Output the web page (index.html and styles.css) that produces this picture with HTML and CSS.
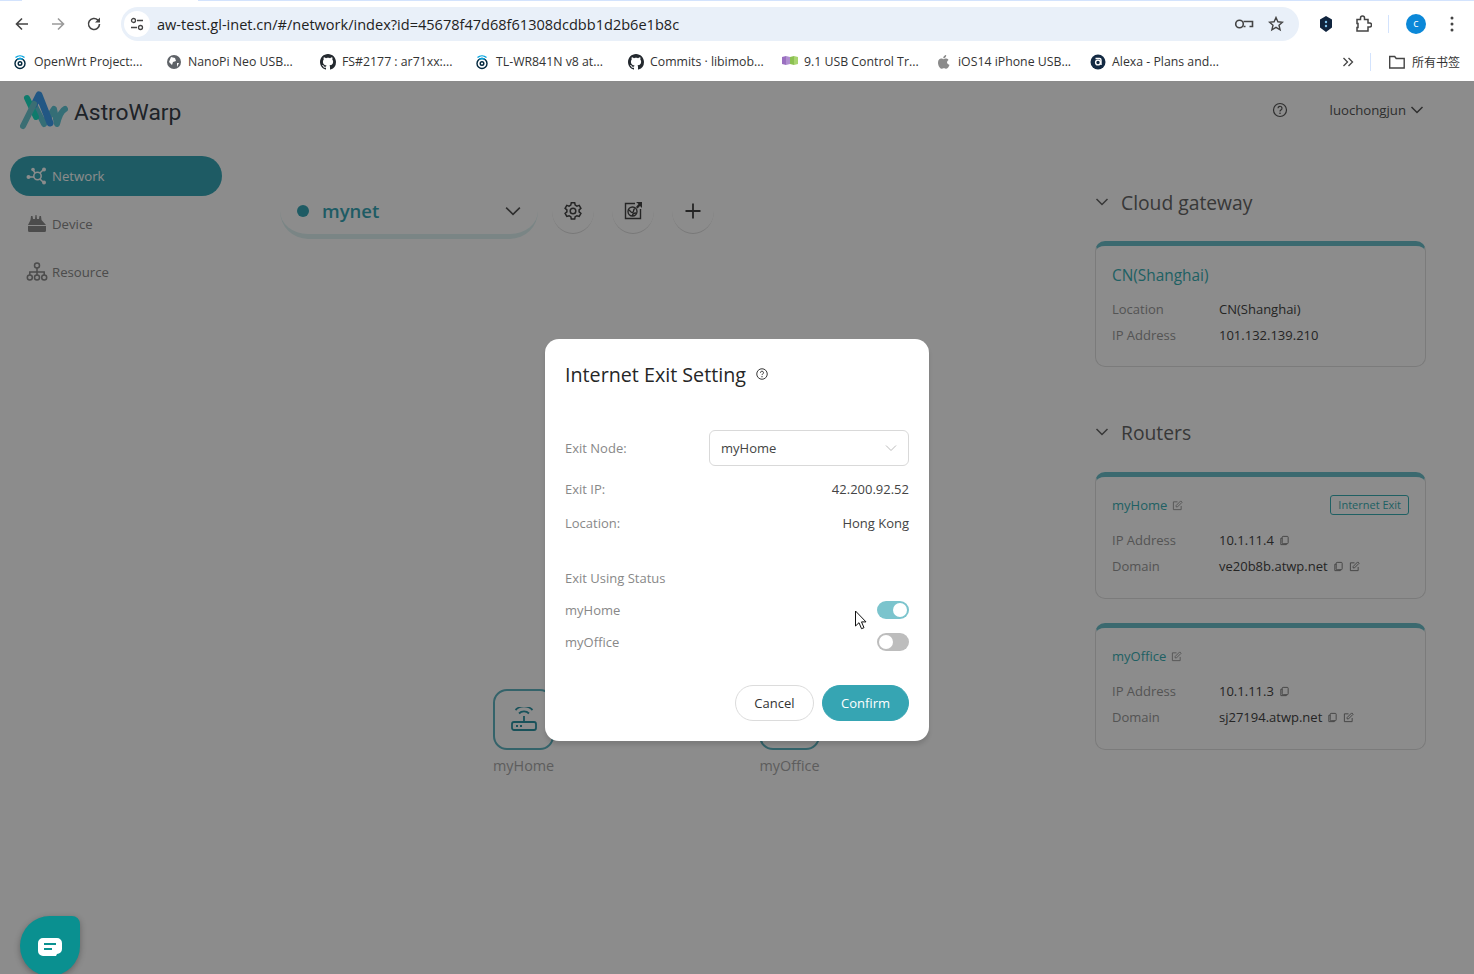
FILE: index.html
```html
<!DOCTYPE html>
<html lang="en">
<head>
    <meta charset="UTF-8">
    <title>AstroWarp</title>
    <link rel="stylesheet" href="styles.css">
</head>
<body>
    <svg class="defs" width="0" height="0">
        <symbol id="github" viewBox="0 0 16 16"><path fill="#24292f" d="M8 0C3.58 0 0 3.58 0 8c0 3.54 2.29 6.53 5.47 7.59.4.07.55-.17.55-.38 0-.19-.01-.82-.01-1.49-2.01.37-2.53-.49-2.69-.94-.09-.23-.48-.94-.82-1.13-.28-.15-.68-.52-.01-.53.63-.01 1.08.58 1.23.82.72 1.21 1.87.87 2.33.66.07-.52.28-.87.51-1.07-1.78-.2-3.64-.89-3.64-3.95 0-.87.31-1.59.82-2.15-.08-.2-.36-1.02.08-2.12 0 0 .67-.21 2.2.82.64-.18 1.32-.27 2-.27.68 0 1.36.09 2 .27 1.53-1.04 2.2-.82 2.2-.82.44 1.1.16 1.92.08 2.12.51.56.82 1.27.82 2.15 0 3.07-1.87 3.75-3.65 3.95.29.25.54.73.54 1.48 0 1.07-.01 1.93-.01 2.2 0 .21.15.46.55.38A8.013 8.013 0 0016 8c0-4.42-3.58-8-8-8z"/></symbol>
        <symbol id="openwrt" viewBox="0 0 16 16"><g fill="none" stroke-width="1.4"><circle cx="8" cy="9.5" r="5" stroke="#00263c"/><circle cx="8" cy="9.5" r="1.8" stroke="#00263c"/><path d="M3.5 3.5a7 7 0 0 1 9 0" stroke="#00a3e0"/><path d="M5.5 5.5a4 4 0 0 1 5 0" stroke="#00a3e0"/></g></symbol>
        <symbol id="edit" viewBox="0 0 12 12"><g fill="none" stroke="currentColor" stroke-width="1"><path d="M10 6.5V10.5H1.5V2H6"/><path d="M4.5 7.5V6L9.5 1l1.5 1.5-5 5z"/></g></symbol>
        <symbol id="copy" viewBox="0 0 12 12"><g fill="none" stroke="currentColor" stroke-width="1"><rect x="3.5" y="1.5" width="6.5" height="8" rx="1"/><path d="M3.5 3.5H2v7h6V9.5"/></g></symbol>
        <symbol id="chev" viewBox="0 0 14 14"><path fill="none" stroke="currentColor" stroke-width="1.5" d="M1.5 4l5.5 5.5L12.5 4"/></symbol>
    </svg>

    <div class="browser">
        <div class="tabstrip"><span class="tab-active"></span></div>
        <div class="toolbar">
            <svg class="tb-icon" width="16" height="16" viewBox="0 0 16 16"><path fill="none" stroke="#444" stroke-width="1.6" d="M14 8H2.5M8 2.5L2.5 8 8 13.5"/></svg>
            <svg class="tb-icon" width="16" height="16" viewBox="0 0 16 16"><path fill="none" stroke="#9a9a9a" stroke-width="1.6" d="M2 8h11.5M8 2.5L13.5 8 8 13.5"/></svg>
            <svg class="tb-icon" width="16" height="16" viewBox="0 0 16 16"><path fill="none" stroke="#444" stroke-width="1.6" d="M13.5 8a5.5 5.5 0 1 1-1.6-3.9L13.5 5.7"/><path fill="#444" d="M14 1.5V6.5H9z"/></svg>
            <div class="omnibox">
                <span class="site-btn">
                    <svg width="16" height="16" viewBox="0 0 16 16"><g fill="none" stroke="#444" stroke-width="1.3"><circle cx="4.5" cy="4.5" r="2"/><path d="M8 4.5h6M2 11.5h6"/><circle cx="11.5" cy="11.5" r="2"/></g></svg>
                </span>
                <span class="url">aw-test.gl-inet.cn/#/network/index?id=45678f47d68f61308dcdbb1d2b6e1b8c</span>
                <svg class="key" width="20" height="14" viewBox="0 0 20 14"><g fill="none" stroke="#444" stroke-width="1.6"><circle cx="5.5" cy="7" r="3.8"/><path d="M9.5 4.5h9v5h-3M9.5 9.5h2"/></g></svg>
                <svg class="star" width="16" height="16" viewBox="0 0 16 16"><path fill="none" stroke="#444" stroke-width="1.4" d="M8 1.500l1.900 4.300 4.600.4-3.500 3 1.100 4.600L8 11.400l-4.100 2.400L5 9.200l-3.500-3 4.600-.4z"/></svg>
            </div>
            <svg class="ext-shield" width="14" height="16" viewBox="0 0 14 16"><path fill="#10243e" d="M7 0l6 3.500v8L7 16l-6-4.500v-8z"/><circle cx="7" cy="6" r="1.2" fill="#7fc4ef"/><circle cx="7" cy="10" r="1.2" fill="#7fc4ef"/></svg>
            <svg class="ext-puzzle" width="18" height="18" viewBox="0 0 18 18"><path fill="none" stroke="#444" stroke-width="1.5" d="M3 4.500h3.500V3a2 2 0 0 1 4 0v1.500H14v3.500h1.500a2 2 0 0 1 0 4H14v4H3v-3.500h1v-4H3z"/></svg>
            <span class="tb-sep"></span>
            <span class="avatar">c</span>
            <svg class="dots" width="4" height="16" viewBox="0 0 4 16"><g fill="#444"><circle cx="2" cy="2" r="1.5"/><circle cx="2" cy="8" r="1.5"/><circle cx="2" cy="14" r="1.5"/></g></svg>
        </div>
        <div class="bookmarks">
            <a class="bm"><svg width="16" height="16"><use href="#openwrt"/></svg>OpenWrt Project:...</a>
            <a class="bm"><svg width="16" height="16" viewBox="0 0 16 16"><circle cx="8" cy="8" r="7" fill="#5f6368"/><path fill="#fff" d="M5 3l4 1 1 3-3 1-1 3-3-3zM11 9l2 0-2 4z"/></svg>NanoPi Neo USB...</a>
            <a class="bm"><svg width="16" height="16"><use href="#github"/></svg>FS#2177 : ar71xx:...</a>
            <a class="bm"><svg width="16" height="16"><use href="#openwrt"/></svg>TL-WR841N v8 at...</a>
            <a class="bm"><svg width="16" height="16"><use href="#github"/></svg>Commits · libimob...</a>
            <a class="bm"><svg width="16" height="16" viewBox="0 0 16 16"><path fill="#9a6fc0" d="M0 3l4-1v9l-4-1z"/><path fill="#b08fd0" d="M4 2l4 1v7l-4 1z"/><path fill="#8cc152" d="M8 3l4-1v9l-4-1z"/><path fill="#a8d46f" d="M12 2l4 1v7l-4 1z"/></svg>9.1 USB Control Tr...</a>
            <a class="bm"><svg width="16" height="16" viewBox="0 0 16 16"><path fill="#8a8a8a" d="M11 8.500c0-1.800 1.400-2.500 1.500-2.600-.8-1.200-2-1.300-2.500-1.300-1-.1-2 .6-2.500.6s-1.300-.6-2.200-.6C3.700 4.600 2 6 2 8.800c0 2.800 2 6 3.500 6 .8 0 1.300-.6 2.400-.6s1.500.6 2.400.6c1.500 0 3-3 3.200-4-.1 0-2.500-.9-2.500-2.300zM9.500 3.300c.5-.6.800-1.500.7-2.300-.7 0-1.600.5-2.100 1.100-.5.500-.9 1.400-.8 2.200.8.100 1.600-.4 2.200-1z"/></svg>iOS14 iPhone USB...</a>
            <a class="bm bm-last"><svg width="16" height="16" viewBox="0 0 16 16"><circle cx="8" cy="8" r="7.5" fill="#132a43"/><circle cx="8" cy="8.5" r="2.4" fill="none" stroke="#fff" stroke-width="1.4"/><path fill="none" stroke="#fff" stroke-width="1.4" d="M5.500 4.500h4a1.500 1.500 0 0 1 1.500 1.500v5"/></svg>Alexa - Plans and...</a>
            <svg class="bm-more" width="12" height="12" viewBox="0 0 12 12"><path fill="none" stroke="#444" stroke-width="1.3" d="M1.500 2l4 4-4 4M6.500 2l4 4-4 4"/></svg>
            <span class="tb-sep bm-sep"></span>
            <a class="bm bm-all"><svg width="18" height="16" viewBox="0 0 18 16"><path fill="none" stroke="#444" stroke-width="1.4" d="M1.700 2.500h5l1.500 2h8v9.500H1.700z"/></svg>所有书签</a>
        </div>
    </div>

    <div class="app">
        <header class="app-header">
            <div class="brand">
                <svg width="48" height="40" viewBox="0 0 48 40">
                    <path fill="none" stroke="#62c8d8" stroke-width="6" stroke-linecap="round" stroke-linejoin="round" d="M15 15l9 18 10-15 3 15c2-8 4-13 8-15"/>
                    <path fill="none" stroke="#3f9ff0" stroke-width="7" stroke-linecap="round" stroke-linejoin="round" d="M14 14l5-10 11 28"/>
                    <path fill="none" stroke="#1be0c5" stroke-width="6" stroke-linecap="round" d="M7 7l9 19"/>
                    <path fill="none" stroke="#6cc8d2" stroke-width="6" stroke-linecap="round" d="M3 35l11-22"/>
                </svg>
                <span class="brand-name">AstroWarp</span>
            </div>
            <div class="user-area">
                <svg width="16" height="16" viewBox="0 0 16 16"><circle cx="8" cy="8" r="6.5" fill="none" stroke="#555" stroke-width="1.2"/><path fill="none" stroke="#555" stroke-width="1.2" d="M6 6.300a2 2 0 1 1 2.800 1.800c-.6.300-.8.600-.8 1.300"/><circle cx="8" cy="11.300" r=".8" fill="#555"/></svg>
                <span class="user-name">luochongjun <svg width="14" height="14"><use href="#chev"/></svg></span>
            </div>
        </header>

        <div class="app-body">
            <nav class="sidebar">
                <a class="nav-item active">
                    <svg width="22" height="20" viewBox="0 0 22 20"><g fill="none" stroke="currentColor" stroke-width="1.5"><circle cx="11.5" cy="10" r="3.7"/><path d="M3 11h5M14 7l3-3M14 13l3 3M9 7L7.500 4.500"/></g><g fill="currentColor"><circle cx="2.5" cy="11" r="2"/><circle cx="18" cy="3.500" r="2"/><circle cx="18" cy="16.500" r="2"/><circle cx="7" cy="3.500" r="1.800"/></g></svg>
                    Network
                </a>
                <a class="nav-item">
                    <svg width="22" height="20" viewBox="0 0 22 20"><path fill="currentColor" d="M2 11l2.500-5 .5-4h1.500l.5 3h2l.5-4h1l.5 4h2l.5-3H15l.5 4L20 11zM2 12h18v4.500a1.500 1.500 0 0 1-1.500 1.500h-15A1.500 1.500 0 0 1 2 16.500z"/></svg>
                    Device
                </a>
                <a class="nav-item">
                    <svg width="22" height="20" viewBox="0 0 22 20"><g fill="none" stroke="currentColor" stroke-width="1.5"><circle cx="11" cy="3.500" r="2.500"/><circle cx="3.800" cy="15.500" r="2.500"/><circle cx="11" cy="15.500" r="2.500"/><circle cx="18.200" cy="15.500" r="2.500"/><path d="M11 6v7M3.800 13v-3h14.400v3"/></g></svg>
                    Resource
                </a>
            </nav>

            <main class="main">
                <div class="net-bar">
                    <div class="net-select">
                        <span class="net-dot"></span>
                        <span class="net-name">mynet</span>
                        <svg class="net-chev" width="16" height="16" viewBox="0 0 14 14"><path fill="none" stroke="#555" stroke-width="1.4" d="M1 4l6 6 6-6"/></svg>
                    </div>
                    <button class="circle-btn"><svg width="20" height="20" viewBox="0 0 20 20"><g fill="none" stroke="#444" stroke-width="1.5"><circle cx="10" cy="10" r="2.800"/><path d="M8.300 1.800h3.400l.5 2.300 1.700 1 2.300-.7 1.700 2.900-1.800 1.600v2l1.800 1.600-1.700 2.900-2.300-.7-1.700 1-.5 2.300H8.300l-.5-2.300-1.700-1-2.300.7-1.700-2.900 1.800-1.600v-2L2.100 7.300l1.700-2.900 2.300.7 1.700-1z"/></g></svg></button>
                    <button class="circle-btn"><svg width="20" height="20" viewBox="0 0 20 20"><g fill="none" stroke="#444" stroke-width="1.4"><path d="M12 2.500H2.500v15h15V8"/><circle cx="9.500" cy="10.500" r="4.500"/><path d="M5.500 9c2 0 2 3 4 2.500S10 7 12 8M9.500 15c0-2 1-3 3.500-3"/></g><path fill="#444" d="M13 1h6v6l-2-2-2.500 2.500-1.500-1.500L15.500 3z"/></svg></button>
                    <button class="circle-btn"><svg width="20" height="20" viewBox="0 0 20 20"><path fill="none" stroke="#444" stroke-width="1.8" d="M10 2.500v15M2.500 10h15"/></svg></button>
                </div>

                <div class="node node-home">
                    <div class="node-box">
                        <svg width="28" height="26" viewBox="0 0 28 26"><g fill="none" stroke="#2f95a5" stroke-width="1.8"><rect x="2" y="15" width="24" height="8" rx="2"/><path d="M14 15V9M9 6.500a7 7 0 0 1 10 0M5.500 3a12 12 0 0 1 17 0"/></g><path stroke="#2f95a5" stroke-width="1.8" d="M6 19h2M10 19h2"/></svg>
                    </div>
                    <span class="node-label">myHome</span>
                </div>
                <div class="node node-office">
                    <div class="node-box"></div>
                    <span class="node-label">myOffice</span>
                </div>
            </main>

            <aside class="panel">
                <section class="group">
                    <h2 class="group-title"><svg width="14" height="14"><use href="#chev"/></svg>Cloud gateway</h2>
                    <div class="card">
                        <div class="card-head"><span class="card-name">CN(Shanghai)</span></div>
                        <div class="kv"><span class="k">Location</span><span class="v">CN(Shanghai)</span></div>
                        <div class="kv"><span class="k">IP Address</span><span class="v">101.132.139.210</span></div>
                    </div>
                </section>
                <section class="group">
                    <h2 class="group-title"><svg width="14" height="14"><use href="#chev"/></svg>Routers</h2>
                    <div class="card">
                        <div class="card-head small">
                            <span class="card-name">myHome</span>
                            <svg class="ic" width="11" height="11"><use href="#edit"/></svg>
                            <span class="exit-tag">Internet Exit</span>
                        </div>
                        <div class="kv"><span class="k">IP Address</span><span class="v">10.1.11.4<svg class="ic" width="11" height="11"><use href="#copy"/></svg></span></div>
                        <div class="kv"><span class="k">Domain</span><span class="v">ve20b8b.atwp.net<svg class="ic" width="11" height="11"><use href="#copy"/></svg><svg class="ic" width="11" height="11"><use href="#edit"/></svg></span></div>
                    </div>
                    <div class="card">
                        <div class="card-head small">
                            <span class="card-name">myOffice</span>
                            <svg class="ic" width="11" height="11"><use href="#edit"/></svg>
                        </div>
                        <div class="kv"><span class="k">IP Address</span><span class="v">10.1.11.3<svg class="ic" width="11" height="11"><use href="#copy"/></svg></span></div>
                        <div class="kv"><span class="k">Domain</span><span class="v">sj27194.atwp.net<svg class="ic" width="11" height="11"><use href="#copy"/></svg><svg class="ic" width="11" height="11"><use href="#edit"/></svg></span></div>
                    </div>
                </section>
            </aside>
        </div>

        <div class="mask">
            <div class="modal">
                <h3 class="modal-title">Internet Exit Setting
                    <svg width="12" height="12" viewBox="0 0 16 16"><circle cx="8" cy="8" r="7" fill="none" stroke="#333" stroke-width="1.3"/><path fill="none" stroke="#333" stroke-width="1.3" d="M6 6.300a2 2 0 1 1 2.800 1.800c-.6.300-.8.600-.8 1.300"/><circle cx="8" cy="11.500" r=".9" fill="#333"/></svg>
                </h3>
                <div class="m-row m-select-row">
                    <span class="m-label">Exit Node:</span>
                    <div class="m-select">myHome
                        <svg width="12" height="12" viewBox="0 0 12 12"><path fill="none" stroke="#bbb" d="M1 3.500l5 5 5-5"/></svg>
                    </div>
                </div>
                <div class="m-row m-info"><span class="m-label">Exit IP:</span><span class="m-val">42.200.92.52</span></div>
                <div class="m-row m-info"><span class="m-label">Location:</span><span class="m-val">Hong Kong</span></div>
                <div class="m-status">Exit Using Status</div>
                <div class="m-row m-switch-row"><span class="m-label">myHome</span><span class="switch on"></span></div>
                <div class="m-row m-switch-row"><span class="m-label">myOffice</span><span class="switch"></span></div>
                <div class="m-actions">
                    <button class="btn">Cancel</button>
                    <button class="btn primary">Confirm</button>
                </div>
            </div>
        </div>

        <svg class="cursor" width="14" height="21" viewBox="0 0 14 21"><path fill="#fff" stroke="#111" stroke-width="1" d="M1.500 1v15l3.500-3.300 2.500 6 2.500-1-2.500-5.800H12z"/></svg>
        <button class="chat-btn">
            <svg width="24" height="18" viewBox="0 0 24 18"><path fill="#fff" d="M5 0h14a5 5 0 0 1 5 5v6a5 5 0 0 1-5 5l-1 2H5a5 5 0 0 1-5-5V5a5 5 0 0 1 5-5z"/><path stroke="#0a9090" stroke-width="2" d="M6 6h12M6 11h8"/></svg>
        </button>
    </div>
</body>
</html>
```

FILE: styles.css
```css
* {
    margin: 0;
    padding: 0;
    box-sizing: border-box;
}

html, body {
    height: 100%;
    overflow: hidden;
}

body {
    display: flex;
    flex-direction: column;
    background-color: #fff;
    font-family: 'Open Sans', 'Noto Sans CJK SC', sans-serif;
    color: #333;
}

.defs {
    position: absolute;
}

/* browser chrome */
.browser {
    height: 82px;
    flex-shrink: 0;
    background-color: #fff;
    border-bottom: 1px solid #8a8a8a;
}

.tabstrip {
    height: 1px;
    background-color: #d3e3fd;
    padding-left: 22px;
}

.tab-active {
    display: block;
    width: 176px;
    height: 1px;
    background-color: #fff;
}

.toolbar {
    height: 41px;
    display: flex;
    align-items: center;
    padding: 5px 0 0 14px;
}

.tb-icon {
    margin-right: 20px;
}

.omnibox {
    width: 1178px;
    height: 34px;
    flex-shrink: 0;
    margin-left: -1px;
    margin-right: 20px;
    display: flex;
    align-items: center;
    background-color: #e9f0f9;
    border-radius: 17px;
    padding: 0 15px 0 3px;
}

.site-btn {
    width: 26px;
    height: 26px;
    border-radius: 50%;
    background-color: #fff;
    display: flex;
    align-items: center;
    justify-content: center;
    margin-right: 7px;
}

.url {
    flex: 1;
    font-size: 14.55px;
    color: #222;
}

.key {
    margin-right: 14px;
}

.ext-shield {
    margin-right: 21px;
    flex-shrink: 0;
}

.ext-puzzle {
    margin-right: 16px;
    flex-shrink: 0;
}

.tb-sep {
    width: 1px;
    height: 18px;
    background-color: #d3e3fd;
    margin-right: 17px;
}

.avatar {
    width: 20px;
    height: 20px;
    flex-shrink: 0;
    border-radius: 50%;
    background-color: #0b88d8;
    color: #fff;
    font-size: 11px;
    line-height: 18px;
    text-align: center;
    margin-right: 24px;
}

.bookmarks {
    height: 39px;
    display: flex;
    align-items: center;
    padding-left: 12px;
    font-size: 12.3px;
    color: #333;
}

.bm {
    display: flex;
    align-items: center;
    gap: 6px;
    width: 154px;
    white-space: nowrap;
}

.bm-last {
    width: 252px;
}

.bm-more {
    margin-right: 16px;
}

.bm-sep {
    margin-right: 17px;
}

.bm-all {
    width: auto;
    font-size: 12px;
}

/* app */
.app {
    position: relative;
    flex: 1;
    display: flex;
    flex-direction: column;
    background-color: #fff;
    min-height: 0;
}

.app-header {
    height: 60px;
    display: flex;
    justify-content: space-between;
    align-items: flex-start;
    padding: 9px 50px 0 20px;
    flex-shrink: 0;
}

.brand {
    display: flex;
    align-items: center;
    gap: 6px;
}

.brand-name {
    font-family: Roboto, sans-serif;
    font-size: 22.8px;
    color: #38404a;
    margin-top: 2px;
}

.user-area {
    display: flex;
    align-items: center;
    gap: 42px;
    height: 38px;
}

.user-name {
    font-size: 13.2px;
    color: #555;
    display: flex;
    align-items: center;
    gap: 4px;
}

.app-body {
    flex: 1;
    display: flex;
    min-height: 0;
}

.sidebar {
    width: 232px;
    flex-shrink: 0;
    padding: 14px 10px 0;
    display: flex;
    flex-direction: column;
    gap: 8px;
}

.nav-item {
    height: 40px;
    border-radius: 20px;
    display: flex;
    align-items: center;
    gap: 4px;
    padding-left: 16px;
    font-size: 13.2px;
    color: #8a8a8a;
}

.nav-item.active {
    background-color: #38a7b6;
    color: #fff;
}

.main {
    position: relative;
    flex: 1;
    padding: 46px 0 0 48px;
}

.net-bar {
    display: flex;
    align-items: flex-start;
}

.net-select {
    width: 258px;
    height: 51px;
    border-bottom: 5px solid #dff3f3;
    border-radius: 0 0 28px 28px;
    display: flex;
    align-items: center;
    padding: 0 17px;
    margin-right: 14px;
}

.net-dot {
    width: 12px;
    height: 12px;
    border-radius: 50%;
    background-color: #38a7b6;
    margin-right: 13px;
    margin-top: -1px;
}

.net-name {
    flex: 1;
    font-size: 18.5px;
    font-weight: 600;
    color: #38a7b6;
    padding-bottom: 2px;
}

.circle-btn {
    width: 42px;
    height: 46px;
    border: none;
    background: none;
    border-bottom: 1px solid #dcdcdc;
    border-radius: 50%;
    margin-right: 18px;
    display: flex;
    align-items: center;
    justify-content: center;
}

.node {
    position: absolute;
    top: 547px;
    display: flex;
    flex-direction: column;
    align-items: center;
    gap: 6px;
}

.node-home { left: 261px; }
.node-office { left: 527px; }

.node-box {
    width: 61px;
    height: 61px;
    border: 2px solid #5fb5c2;
    border-radius: 14px;
    display: flex;
    align-items: center;
    justify-content: center;
}

.node-label {
    font-size: 14.4px;
    color: #aaa;
}

.panel {
    width: 331px;
    margin-right: 48px;
    flex-shrink: 0;
    padding-top: 46px;
}

.group {
    margin-bottom: 51px;
}

.group-title {
    display: flex;
    align-items: center;
    gap: 12px;
    height: 28px;
    font-size: 19.3px;
    font-weight: 400;
    color: #666;
    margin-bottom: 25px;
}

.group + .group .group-title {
    margin-bottom: 26px;
}

.card {
    height: 126px;
    border: 1px solid #e0e0e0;
    border-top: 5px solid #6cc0cb;
    border-radius: 10px;
    padding: 0 16px;
}

.group + .group .card {
    height: 127px;
    margin-bottom: 24px;
}

.card-head {
    display: flex;
    align-items: center;
    height: 50px;
    padding-top: 8px;
    font-size: 15.4px;
    color: #3ab0b5;
    gap: 5px;
}

.card-head.small {
    font-size: 13px;
    height: 50px;
    padding-top: 6px;
}

.ic {
    color: #999;
    margin-left: 0;
    flex-shrink: 0;
}

.v .ic {
    color: #777;
    margin-left: 5px;
    vertical-align: -1px;
}

.exit-tag {
    margin-left: auto;
    border: 1px solid #3ab0b5;
    border-radius: 3px;
    font-size: 11px;
    padding: 0 7px;
    height: 20px;
    line-height: 18px;
}

.kv {
    display: flex;
    align-items: center;
    height: 26px;
    font-size: 13px;
}

.k {
    width: 107px;
    color: #999;
}

.v {
    color: #444;
}

/* modal */
.mask {
    position: absolute;
    inset: 0;
    display: flex;
    justify-content: center;
    align-items: flex-start;
    padding-top: 257px;
    background-color: rgba(0, 0, 0, 0.45);
}

.modal {
    width: 384px;
    height: 402px;
    background-color: #fff;
    border-radius: 14px;
    box-shadow: 0 4px 4px rgba(0, 0, 0, 0.12);
    padding: 20px;
}

.modal-title {
    display: flex;
    align-items: center;
    gap: 10px;
    height: 30px;
    font-size: 19.7px;
    font-weight: 500;
    color: #262626;
    margin-bottom: 41px;
}

.m-row {
    display: flex;
    align-items: center;
    justify-content: space-between;
    font-size: 13px;
}

.m-label {
    color: #888;
}

.m-val {
    color: #444;
}

.m-select-row {
    height: 36px;
    margin-bottom: 6px;
}

.m-select {
    width: 200px;
    height: 36px;
    border: 1px solid #d9d9d9;
    border-radius: 6px;
    display: flex;
    align-items: center;
    justify-content: space-between;
    padding: 0 11px;
    color: #444;
}

.m-info {
    height: 34px;
}

.m-status {
    margin-top: 21px;
    height: 33px;
    display: flex;
    align-items: center;
    font-size: 13px;
    color: #888;
}

.m-switch-row {
    height: 32px;
}

.switch {
    position: relative;
    width: 32px;
    height: 18px;
    border-radius: 9px;
    background-color: #bdbdbd;
}

.switch::after {
    content: '';
    position: absolute;
    top: 2px;
    left: 2px;
    width: 14px;
    height: 14px;
    border-radius: 50%;
    background-color: #fff;
}

.switch.on {
    background-color: #7bc4cd;
}

.switch.on::after {
    left: 16px;
}

.m-actions {
    display: flex;
    justify-content: flex-end;
    gap: 8px;
    margin-top: 27px;
}

.btn {
    height: 36px;
    border-radius: 18px;
    border: 1px solid #dcdcdc;
    background-color: #fff;
    padding: 0 18.5px;
    font-family: inherit;
    font-size: 13px;
    color: #333;
}

.btn.primary {
    background-color: #36a5b3;
    border-color: #36a5b3;
    color: #fff;
    padding: 0 18px;
}

.cursor {
    position: absolute;
    left: 854px;
    top: 528px;
}

.chat-btn {
    position: absolute;
    left: 20px;
    top: 834px;
    width: 60px;
    height: 60px;
    border: none;
    background-color: #0a9090;
    border-radius: 50% 8px 50% 50%;
    box-shadow: 0 2px 6px rgba(0, 0, 0, 0.3);
    display: flex;
    align-items: center;
    justify-content: center;
    padding-top: 2px;
}
```
